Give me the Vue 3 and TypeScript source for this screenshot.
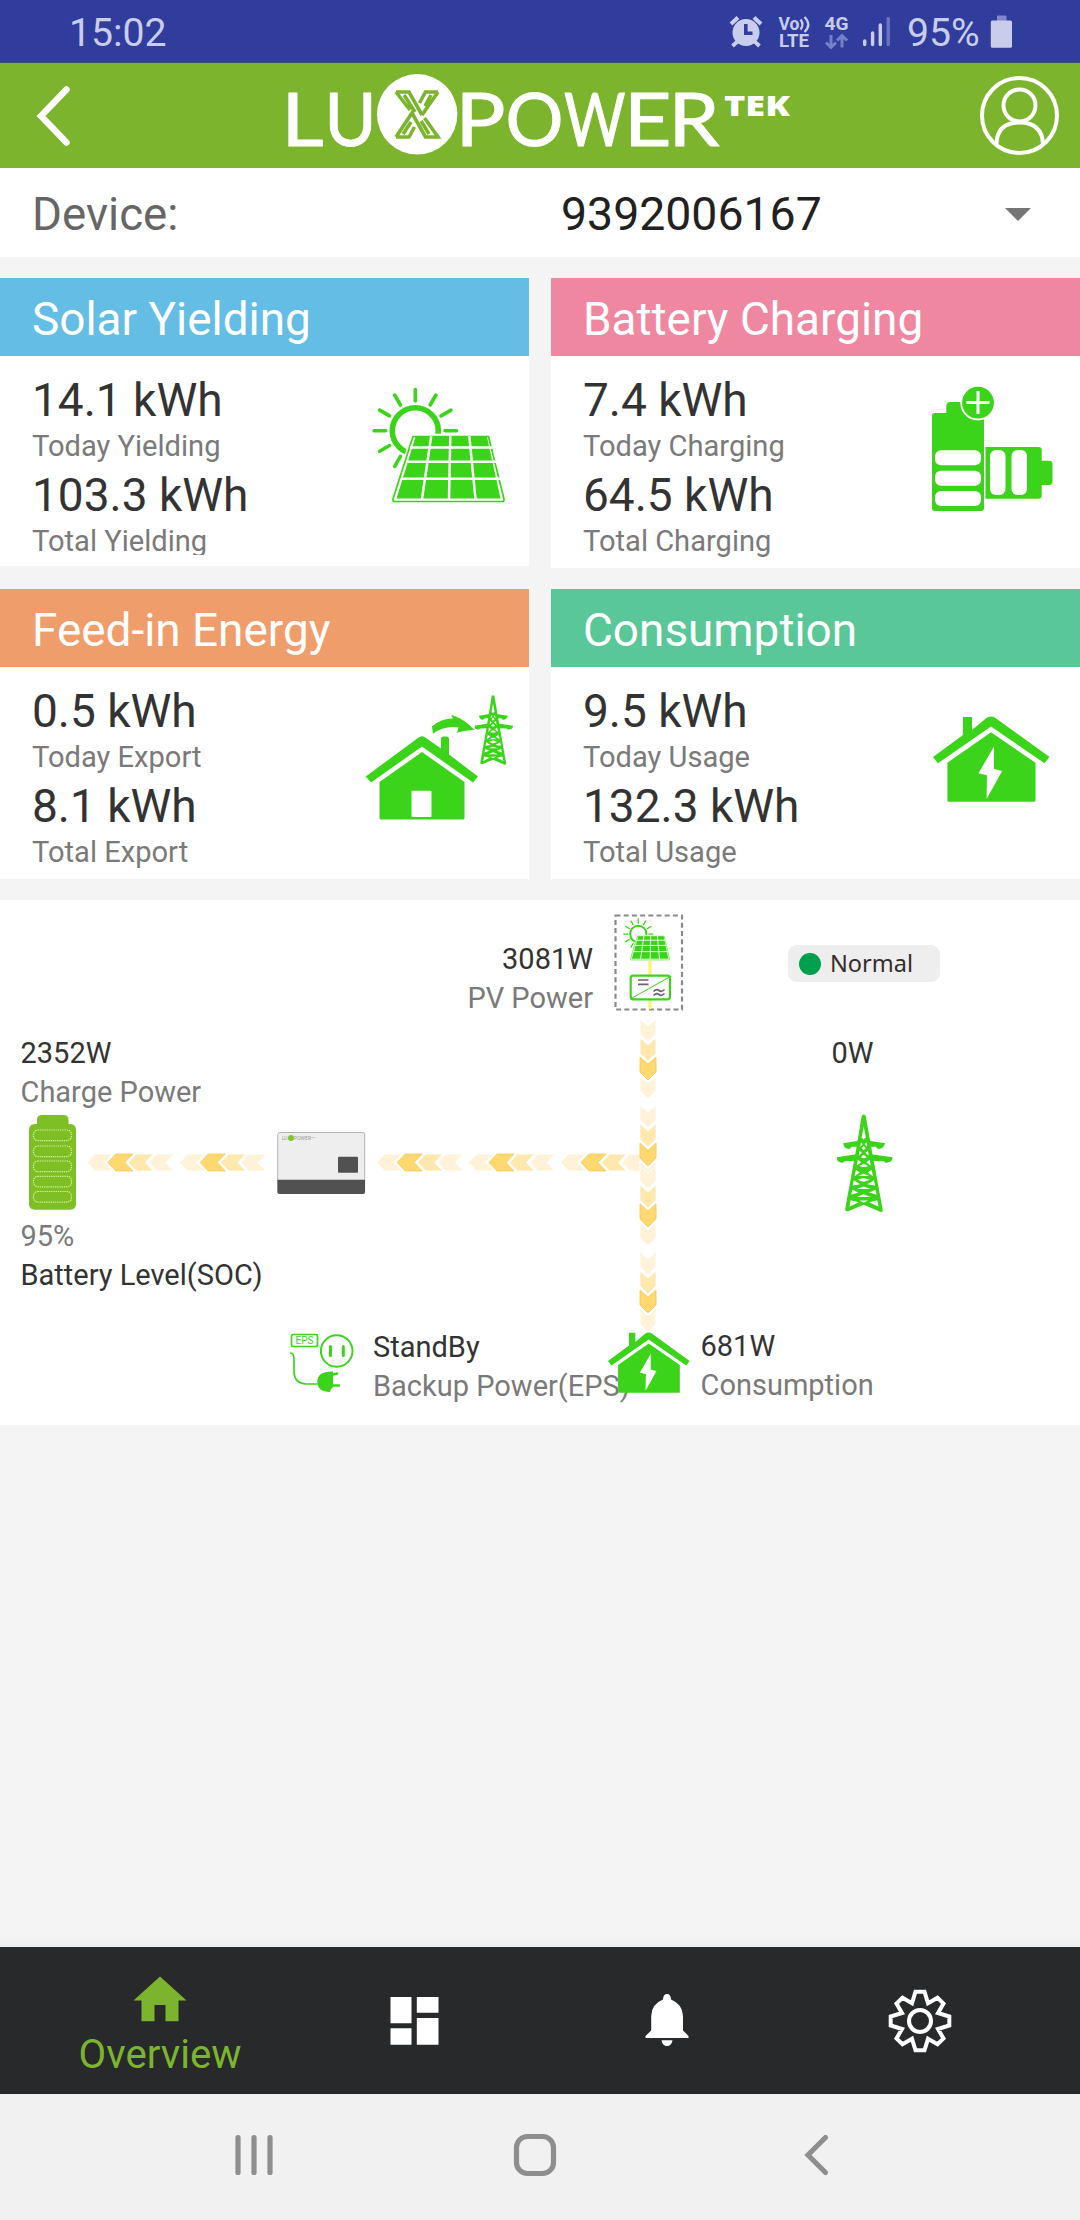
<script setup lang="ts">
interface Metric {
  value: string
  label: string
}
interface Card {
  title: string
  tone: string
  icon: 'solar' | 'battery' | 'export' | 'house'
  metrics: Metric[]
}
interface Chevron {
  points: string
  tone: string
}

const rows: Card[][] = [
  [
    {
      title: 'Solar Yielding',
      tone: 'blue',
      icon: 'solar',
      metrics: [
        { value: '14.1 kWh', label: 'Today Yielding' },
        { value: '103.3 kWh', label: 'Total Yielding' },
      ],
    },
    {
      title: 'Battery Charging',
      tone: 'pink',
      icon: 'battery',
      metrics: [
        { value: '7.4 kWh', label: 'Today Charging' },
        { value: '64.5 kWh', label: 'Total Charging' },
      ],
    },
  ],
  [
    {
      title: 'Feed-in Energy',
      tone: 'orange',
      icon: 'export',
      metrics: [
        { value: '0.5 kWh', label: 'Today Export' },
        { value: '8.1 kWh', label: 'Total Export' },
      ],
    },
    {
      title: 'Consumption',
      tone: 'green',
      icon: 'house',
      metrics: [
        { value: '9.5 kWh', label: 'Today Usage' },
        { value: '132.3 kWh', label: 'Total Usage' },
      ],
    },
  ],
]

// Wordmark letters: glyph, left edge and advance width.
const wordmark: [string, number, number][] = [
  ['L', 281.5, 42],
  ['U', 324.5, 52],
  ['P', 455.5, 50],
  ['O', 505.5, 58],
  ['W', 564, 61.5],
  ['E', 624, 47.5],
  ['R', 668.5, 51],
]

const tones = ['faint', 'mid', 'strong', 'faint']

// Downward flow: four chevrons per group between the PV array and the house.
const down: Chevron[] = [119, 205, 266, 352].flatMap((top) =>
  tones.map((tone, i) => {
    const y = top + i * 19
    return { tone, points: `640,${y} 648,${y + 7} 656,${y} 656,${y + 15} 648,${y + 23} 640,${y + 15}` }
  }),
)

// Leftward flow: from the junction through the inverter to the battery.
const left: Chevron[] = [87.3, 179.7, 376.7, 468.5, 560.5].flatMap((start) =>
  ['faint', 'strong', 'mid', 'faint'].map((tone, i) => {
    const x = start + i * 20.5
    return { tone, points: `${x},262.5 ${x + 8},254 ${x + 25},254 ${x + 17},262.5 ${x + 25},271 ${x + 8},271` }
  }),
)

const rays = Array.from({ length: 12 }, (_, i) => i * 30).filter((a) => a !== 120 && a !== 150 && a !== 180)
const slots = [230, 246, 261, 276.3, 291.5]
</script>

<template>
  <div class="screen">
    <svg class="defs" aria-hidden="true">
      <symbol id="solar" viewBox="368 384 142 124" preserveAspectRatio="none">
        <g class="ln" stroke-width="3.6" stroke-linecap="round">
          <line v-for="a in rays" :key="a" x1="415.3" y1="401" x2="415.3" y2="389.5" :transform="`rotate(${a} 415.3 430.7)`" />
        </g>
        <circle class="ln" cx="415.3" cy="430.7" r="23" stroke-width="5.6" />
        <path d="M413 435.8H488L504 499Q505 502 501.500 502H395.500Q391.500 502 392.500 499Z" fill="#fff" stroke="#fff" stroke-width="4" />
        <path class="ln" d="M413 436.500H488.500L504 499Q504.500 501.500 502 501.500H395Q392.500 501.500 393 499Z" stroke-width="1.700" />
        <path class="fl" d="M415.500 437H487L500.500 498.500H396.500Z" />
        <g stroke="#fff" stroke-width="2.500">
          <path d="M431.200 436L422 499M450.300 436L449 499M469.300 436L475.500 499" />
          <path d="M410 447.600H492M406 461.800H496M402 478.800H500" />
        </g>
      </symbol>

      <symbol id="house" viewBox="933 716 117 86" preserveAspectRatio="none">
        <path class="fl" d="M963 717H972V730L985.500 718.700Q991 714.500 996.500 718.700L1049.500 757L1044.500 763.300L991 726.500L938 763.300L933 757L963 735Z" />
        <path class="fl" d="M991 732.300L1035.500 762.700V800.500Q1035.500 801.700 1034 801.700H948.900Q947.400 801.700 947.400 800.500V762.700Z" />
        <path fill="#fff" d="M994 746.500L978.500 773.300L987 775.300L986.600 799L1002.200 771L994 769Z" />
      </symbol>

      <symbol id="tower" viewBox="0 0 56 98" preserveAspectRatio="none">
        <path class="fl" d="M25 1.500Q27 -1 29 1.500L34 30L46 95.500Q46.500 98.500 43.500 97.500L27 90.500L11.500 97Q8 97.500 8.500 94.500L20 32Z" />
        <g fill="#fff">
          <path d="M27 12L29 23L27 25.500L25 23Z" />
          <path d="M24.300 28L26 30L23.500 32.500ZM29.700 28L28 30L30.500 32.500ZM27 31.500L29 34L27 36L25 34Z" />
          <path d="M22.700 36.500L25.200 38.500L22 41.500ZM31.300 36.500L28.800 38.500L32 41.500ZM27 40.500L30 43Q27 45 24 43Z" />
          <path d="M21 45.500L24.300 48L20 51.500ZM33 45.500L29.700 48L34 51.500ZM27 49.500L31.500 51.800Q27 53.500 22.500 51.800Z" />
          <path d="M19.300 55.500L23 58.300L17.800 62ZM34.700 55.500L31 58.300L36.500 62ZM27 59.500L32.500 61.800H21.500ZM21 65.500L27 63.800L33 65.500L27 67.800Z" />
          <path d="M17 66L23.500 70L16 71.200ZM37.300 66L30.500 70L38.300 71.200ZM20 74.700L27 72.300L34 74.700Z" />
          <path d="M15.800 75.500L21.500 78.200L14.500 80.500ZM38.500 75.500L32.500 78.200L40 80.500ZM20 82.800L27 80L34 82.800Z" />
          <path d="M14 86L22 88L12.600 92.500ZM40.500 86L32.500 88L42 92.500ZM22.500 86.300H31.500L27 88.300Z" />
        </g>
        <path class="fl" d="M6.500 29L22 26.500V32.500H15Q14 35 11 34.500Q7 34 6.500 29ZM48.500 29L32 26.500V32.500H39Q40 35 43 34.500Q47 34 48.500 29Z" />
        <path class="fl" d="M0 43L20 40V46.500L8 47Q6 49.500 3.500 48Q0 47.500 0 43ZM56 43L34 40V46.500L47 47Q49 49.500 51.500 48Q56 47.500 56 43Z" />
      </symbol>
    </svg>

    <header class="status">
      <span class="clock">15:02</span>
      <svg class="alarm" width="34" height="63" viewBox="729 0 34 63">
        <circle cx="746" cy="32.500" r="13.500" fill="#c9cdeb" />
        <path d="M731 24L738 17.500M761 24L754 17.500" stroke="#c9cdeb" stroke-width="4" />
        <path d="M738 41L732.500 46M754 41L759.500 46" stroke="#c9cdeb" stroke-width="3.800" />
        <path d="M745.800 24V33.200H752.500" fill="none" stroke="#303d9c" stroke-width="3.600" />
      </svg>
      <svg width="120" height="63" viewBox="775 0 120 63">
        <g class="tiny">
          <text x="778.500" y="30" font-size="18.500" textLength="21" lengthAdjust="spacingAndGlyphs">Vo</text>
          <text x="779" y="47" font-size="17.500" textLength="30" lengthAdjust="spacingAndGlyphs">LTE</text>
          <text x="824.500" y="30" font-size="19" textLength="24" lengthAdjust="spacingAndGlyphs">4G</text>
        </g>
        <path d="M800.500 19.500Q804.500 24.500 800.500 29.500M804.500 17Q812 24.500 804.500 32" fill="none" stroke="#c9cdeb" stroke-width="2.300" />
        <path d="M831 35V47M826 42.500L831 47.500L836 42.500M842 47.500V36M837 40.500L842 35.500L847 40.500" fill="none" stroke="#7580c6" stroke-width="3" />
        <g stroke="#c9cdeb" stroke-width="3.400" stroke-linecap="round">
          <path d="M864.700 41V44.500M872.600 33V44.500M880.300 25V44.500" />
          <path d="M888.200 18.500V44.500" stroke="#6a74bd" />
        </g>
      </svg>
      <span class="percent">95%</span>
      <svg class="cell" width="24" height="63" viewBox="990 0 24 63">
        <rect x="997" y="15.500" width="9.500" height="6" rx="1" fill="#7e88cb" />
        <rect x="990.800" y="20.500" width="21.200" height="27.300" rx="1.500" fill="#c9cdeb" />
      </svg>
    </header>

    <div class="topbar">
      <svg width="1080" height="105" viewBox="0 63 1080 105">
        <path d="M66.500 89.500L41 116L66.500 142.500" fill="none" stroke="#fff" stroke-width="6.500" stroke-linecap="round" />
        <g class="logo">
          <text v-for="[ch, x, w] in wordmark" :key="ch" :x="x" y="146.200" :textLength="w" lengthAdjust="spacingAndGlyphs">{{ ch }}</text>
          <text class="tek" x="724" y="115.500" textLength="66" lengthAdjust="spacingAndGlyphs">TEK</text>
        </g>
        <ellipse cx="417.200" cy="114.300" rx="40.200" ry="40.200" fill="#fff" />
        <g fill="none" stroke="#7cb52d" stroke-width="3.600">
          <path d="M396 92H409L422 115M396 92L410 110M404 95L415 112M438 92H425.500L419.500 103M438 92L422 115M431 95L425 106" />
          <path d="M396 137H409L414.500 127M396 137L412 113L425.500 137H438L424.500 118M403 134L411 122M429 134L421 121" />
        </g>
        <g fill="none" stroke="#fff" stroke-width="4">
          <circle cx="1019.500" cy="115.500" r="37.500" />
          <circle cx="1019.500" cy="105.500" r="16" />
          <path d="M996.500 144Q997 122.500 1019.500 122.500Q1042 122.500 1043 144" />
        </g>
      </svg>
    </div>

    <div class="device">
      <span class="device-label">Device:</span>
      <span class="device-id">9392006167</span>
      <span class="caret"></span>
    </div>

    <div v-for="(row, r) in rows" :key="r" class="row">
      <section v-for="card in row" :key="card.title" class="card" :class="card.tone">
        <h2>{{ card.title }}</h2>
        <div class="body">
          <div class="metrics">
            <template v-for="m in card.metrics" :key="m.label">
              <p class="value">{{ m.value }}</p>
              <p class="label">{{ m.label }}</p>
            </template>
          </div>
          <svg v-if="card.icon === 'solar'" class="i-solar" width="142" height="124"><use href="#solar" /></svg>
          <svg v-else-if="card.icon === 'battery'" class="i-battery" width="122" height="128" viewBox="931 385 122 128">
            <path class="fl" d="M946.300 413V406Q946.300 402 950.500 402H970V413H981Q984 413 984 416V508Q984 511 981 511H935Q932 511 932 508V416Q932 413 935 413Z" />
            <circle cx="978" cy="402.700" r="16.800" fill="#3bd41a" stroke="#fff" stroke-width="1.800" />
            <path d="M966.500 402.500H989.500M978 391V414" stroke="#fff" stroke-width="3" />
            <g fill="#fff">
              <rect x="935" y="450.300" width="46" height="15" rx="6" />
              <rect x="935" y="470.700" width="46" height="15" rx="6" />
              <rect x="935" y="491.100" width="46" height="15" rx="6" />
            </g>
            <path class="fl" d="M985.500 447H1038.500Q1041.700 447 1041.700 450V460.700H1049Q1052.500 460.700 1052.500 464V481.500Q1052.500 485 1049 485H1041.700V495.700Q1041.700 498.700 1038.500 498.700H985.500Z" />
            <g fill="#fff">
              <rect x="990" y="450" width="15.500" height="45" rx="6" />
              <rect x="1011.500" y="450" width="15.500" height="45" rx="6" />
            </g>
          </svg>
          <svg v-else-if="card.icon === 'export'" class="i-export" width="150" height="128" viewBox="365 694 150 128">
            <path class="fl" d="M418 738Q422 734.500 426 738L441 748.500V739Q441 736.500 443.500 736.500H446.500Q449 736.500 449 739V754.500L478 776.500L473 782.500L422 746.500L371 782.500L365.700 776.500Z" />
            <path class="fl" d="M422 752L464.500 782V818Q464.500 819.500 463 819.500H381Q379.500 819.500 379.500 818V782Z" />
            <rect x="411.500" y="790.700" width="20" height="26.300" rx="1" fill="#fff" />
            <path class="fl" d="M432 726.500Q441 718.500 453 718.500L451 714.500Q466 720 474.500 730Q464 730.500 457 732.700L458.500 727.500Q444 725.500 433 733.700Z" />
            <use href="#tower" x="474.500" y="695" width="38.500" height="70" />
          </svg>
          <svg v-else class="i-house" width="117" height="86"><use href="#house" /></svg>
        </div>
      </section>
    </div>

    <section class="flow">
      <svg width="1080" height="525" viewBox="0 0 1080 525">
        <polygon v-for="(c, i) in left" :key="'l' + i" :points="c.points" :class="c.tone" />
        <rect x="640" y="254" width="16" height="17" fill="#fff" />
        <polygon v-for="(c, i) in down" :key="'d' + i" :points="c.points" :class="c.tone" />

        <g>
          <rect x="615.500" y="15.500" width="66.500" height="94" fill="none" stroke="#8a8a8a" stroke-width="2.200" stroke-dasharray="5 3.200" />
          <path d="M650 60V75M650 100V109" stroke="#fbf27a" stroke-width="3.400" />
          <use href="#solar" x="621.600" y="17" width="50.100" height="45.300" />
          <rect class="ln" x="630.700" y="75.700" width="39.300" height="23.600" rx="2.500" stroke-width="2.200" />
          <path class="ln" d="M632 98L669.500 77" stroke-width="1" />
          <path d="M638 80H648.500M638 84.300H648.500M653.500 91.500Q656.500 88.500 659 90.500T664.500 89.500M653.500 95.500Q656.500 92.500 659 94.500T664.500 93.500" fill="none" stroke="#666" stroke-width="1.700" />
        </g>

        <g>
          <path fill="#7fbf26" d="M37 224V220Q37 215 42 215H63.500Q68.500 215 68.500 220V224H70Q76 224 76 230V304Q76 309.700 70 309.700H35Q29 309.700 29 304V230Q29 224 35 224Z" />
          <rect v-for="y in slots" :key="y" x="33.500" :y="y" width="38" height="10.600" rx="4.500" fill="none" stroke="#d3f09d" stroke-width="1.200" stroke-dasharray="1.300 .9" />
        </g>

        <g>
          <rect x="277.700" y="232.500" width="87" height="61" rx="2" fill="#eee" stroke="#b4b4b4" stroke-width="1" />
          <path d="M277.500 279.700H365V292Q365 294 363 294H279.500Q277.500 294 277.500 292Z" fill="#515151" />
          <rect x="338" y="256.700" width="20" height="16" rx="1" fill="#515151" />
          <text class="brand" x="282" y="240" textLength="5.500">LU</text>
          <circle cx="291" cy="238" r="3" fill="#7cc42d" />
          <text class="brand" x="294" y="240" textLength="17" lengthAdjust="spacingAndGlyphs">POWER</text>
          <text class="brand brand-tek" x="311" y="238">TEK</text>
        </g>

        <use href="#tower" x="836.700" y="214.300" width="56" height="98" />

        <g class="ln" stroke-width="1.700" stroke-linecap="round">
          <rect x="291.500" y="434.500" width="26" height="12" rx="1.500" />
          <ellipse cx="336.700" cy="451" rx="15.800" ry="15.700" stroke-width="2" />
          <path d="M330.500 446.500V455.500M343.300 446.500V455.500" stroke-width="3" />
          <path d="M290.700 453Q294 453.500 294 459V472Q294.500 483.500 306 484H319" />
          <path d="M331 475L337 473.500M331 485.500H339" stroke-width="2.400" />
        </g>
        <path class="fl" d="M333 471.500Q317.500 471 317.300 481.500Q317.500 492 330 492L331 489Q333 488.500 333 485Z" />
        <text class="eps" x="295.500" y="444.300" textLength="18" lengthAdjust="spacingAndGlyphs">EPS</text>
      </svg>

      <div class="node pv"><b>3081W</b><span>PV Power</span></div>
      <div class="badge"><i></i>Normal</div>
      <div class="node charge"><b>2352W</b><span>Charge Power</span></div>
      <div class="node grid"><b>0W</b></div>
      <div class="node soc"><span>95%</span><b>Battery Level(SOC)</b></div>
      <div class="node backup"><b>StandBy</b><span>Backup Power(EPS)</span></div>
      <svg class="load-icon" width="82" height="61"><use href="#house" /></svg>
      <div class="node load"><b>681W</b><span>Consumption</span></div>
    </section>

    <div class="spacer"></div>

    <nav class="tabs">
      <a class="tab active">
        <svg width="54" height="46" viewBox="133.500 1975.500 54 46">
          <path fill="#7cb52d" d="M160.500 1976L187 2000H179V2020.700H166V2004.500H155V2020.700H142V2000H134Z" />
        </svg>
        <span>Overview</span>
      </a>
      <a class="tab">
        <svg width="49" height="48" viewBox="389.500 1997 49 48">
          <path fill="#fff" d="M390 1997H411V2023.300H390ZM390 2028.200H411V2044.700H390ZM416.300 1997H438V2012.700H416.300ZM416.300 2018H438V2044.700H416.300Z" />
        </svg>
      </a>
      <a class="tab">
        <svg class="bell" width="44" height="53" viewBox="644.500 1995 44 53">
          <path fill="#fff" d="M666.500 1995Q670.300 1995 670.500 2000.500Q682 2005 682.500 2017V2031.500L688 2037V2039H645V2037L650.700 2031.500V2017Q651 2005 662.500 2000.500Q662.700 1995 666.500 1995ZM661 2041.200H672Q671 2047 666.500 2047T661 2041.200Z" />
        </svg>
      </a>
      <a class="tab">
        <svg width="64" height="64" viewBox="-32 -32 64 64">
          <g fill="none" stroke="#fff" stroke-width="4">
            <path d="M-4.500 -29.300H4.500L8 -17.800L17.500 -23.300L23.500 -17.500L18 -8L29.300 -4.500V4.500L18 8L23.500 17.500L17.500 23.300L8 17.800L4.500 29.300H-4.500L-8 17.800L-17.500 23.300L-23.500 17.500L-18 8L-29.300 4.500V-4.500L-18 -8L-23.500 -17.500L-17.500 -23.300L-8 -17.800Z" />
            <circle r="11" />
          </g>
        </svg>
      </a>
    </nav>

    <div class="sysnav">
      <svg width="1080" height="126" viewBox="0 2094 1080 126" fill="none" stroke="#8e8e8e" stroke-width="5.200" stroke-linecap="round">
        <path d="M238 2137.500V2172.500M254 2137.500V2172.500M270 2137.500V2172.500" />
        <rect x="516.500" y="2136.500" width="37" height="37" rx="11" />
        <path d="M825.500 2137.500L808 2155L825.500 2172.500" />
      </svg>
    </div>
  </div>
</template>

<style>
body {
  margin: 0;
  background: #f4f4f4;
}
</style>

<style scoped>
.screen {
  width: 1080px;
  height: 2220px;
  display: flex;
  flex-direction: column;
  background: #f4f4f4;
  font-family: Roboto, sans-serif;
  overflow: hidden;
}
svg {
  display: block;
  flex: none;
}
.defs {
  position: absolute;
  width: 0;
  height: 0;
}
.ln {
  fill: none;
  stroke: #3bd41a;
}
.fl {
  fill: #3bd41a;
}

.status {
  height: 63px;
  box-sizing: border-box;
  border-bottom: 1px solid #3a5561;
  display: flex;
  background: #303d9c;
  color: #c9cdeb;
  font-size: 39.200px;
  line-height: 67px;
}
.clock {
  width: 660px;
  padding-left: 69px;
}
.alarm {
  margin-right: 12px;
}
.tiny {
  fill: #c9cdeb;
  font-weight: 700;
}
.percent {
  width: 83px;
  padding-left: 12px;
}

.topbar {
  height: 105px;
  background: #7cb52d;
}
.logo {
  fill: #fff;
  font-family: Lato, sans-serif;
  font-size: 73px;
  stroke: #fff;
  stroke-width: 1;
  stroke-linejoin: round;
}
.tek {
  font-family: "Open Sans", sans-serif;
  font-size: 29px;
  font-weight: 800;
  stroke-width: 0;
}

.device {
  height: 89px;
  box-sizing: border-box;
  padding: 0 49px 0 32px;
  display: flex;
  align-items: center;
  background: #fff;
  font-size: 46.400px;
  line-height: 89px;
  margin-bottom: 21px;
}
.device-label {
  width: 529px;
  padding-top: 4px;
  font-size: 45.700px;
  color: #666;
}
.device-id {
  flex: 1;
  padding-top: 4px;
  color: #212121;
}
.caret {
  margin-top: 3px;
  border: 13px solid transparent;
  border-top-color: #757575;
  border-bottom: 0;
}

.row {
  display: grid;
  grid-template-columns: 529px 529px;
  column-gap: 22px;
  align-items: start;
  margin-bottom: 21px;
}
.card {
  height: 290px;
  background: #fff;
}
.card.blue {
  height: 288px;
}
h2 {
  margin: 0;
  height: 78px;
  box-sizing: border-box;
  padding: 5px 0 0 32px;
  color: #fff;
  font-size: 45.900px;
  font-weight: 400;
  line-height: 73px;
}
.blue h2 {
  background: #64bde5;
}
.pink h2 {
  background: #ef87a1;
}
.orange h2 {
  background: #f09d6c;
}
.green h2 {
  background: #59c798;
}
.body {
  display: flex;
  justify-content: space-between;
  padding-left: 32px;
}
.metrics {
  padding-top: 17px;
}
.blue .metrics {
  height: 182px;
  overflow: hidden;
}
p {
  margin: 0;
}
.value {
  font-size: 46px;
  line-height: 54px;
  color: #333;
}
.label {
  font-size: 29.100px;
  line-height: 39px;
  margin-bottom: 2px;
  color: #7a7a7a;
}
.i-solar {
  margin: 28px 19px 0 0;
}
.i-battery {
  margin: 29px 27px 0 0;
}
.i-export {
  margin: 27px 14px 0 0;
}
.i-house {
  margin: 49px 30px 0 0;
}

.flow {
  position: relative;
  height: 525px;
  background: #fff;
}
.faint {
  fill: #fff2d8;
  stroke: #fff;
  stroke-width: 0.8;
}
.mid {
  fill: #ffe8ad;
  stroke: #fff;
  stroke-width: 0.8;
}
.strong {
  fill: #ffd970;
  stroke: #f3c958;
  stroke-width: 0.8;
}
.brand {
  fill: #999;
  font-size: 5px;
}
.brand-tek {
  font-size: 2.5px;
}
.eps {
  fill: #3bd41a;
  font-size: 11.500px;
}
.node {
  position: absolute;
  display: flex;
  flex-direction: column;
  font-size: 29px;
  line-height: 39px;
  white-space: nowrap;
  color: #7a7a7a;
}
.node b {
  font-weight: 400;
  color: #333;
}
.pv {
  right: 487px;
  top: 40px;
  text-align: right;
}
.charge {
  left: 20.500px;
  top: 134px;
}
.grid {
  left: 831.500px;
  top: 134px;
}
.soc {
  left: 20.500px;
  top: 317px;
}
.backup {
  left: 373px;
  top: 428px;
}
.load-icon {
  position: absolute;
  left: 608px;
  top: 431.500px;
}
.load {
  left: 700.500px;
  top: 427px;
}
.badge {
  position: absolute;
  left: 788px;
  top: 45px;
  width: 152px;
  height: 37px;
  border-radius: 9px;
  background: #eee;
  display: flex;
  align-items: center;
  font: 23.500px/34px "Noto Sans", sans-serif;
  line-height: 31px;
  padding-bottom: 0;
  color: #332c2b;
}
.badge i {
  width: 22px;
  height: 22px;
  margin: 0 9px 0 11px;
  border-radius: 50%;
  background: #00a04e;
}

.spacer {
  flex: 1;
  background: linear-gradient(#f4f4f4 calc(100% - 14px), #ededed);
}

.tabs {
  height: 147px;
  display: grid;
  grid-template-columns: 320px 188px 318px 188px;
  background: #28292b;
}
.tab {
  display: flex;
  flex-direction: column;
  align-items: center;
  justify-content: center;
}
.tab.active {
  justify-content: flex-start;
  padding-top: 28.500px;
}
.tab span {
  color: #7cb52d;
  font-size: 40.200px;
  line-height: 46px;
  margin-top: 10px;
}
.sysnav {
  height: 126px;
  background: #f1f1f1;
}
</style>
